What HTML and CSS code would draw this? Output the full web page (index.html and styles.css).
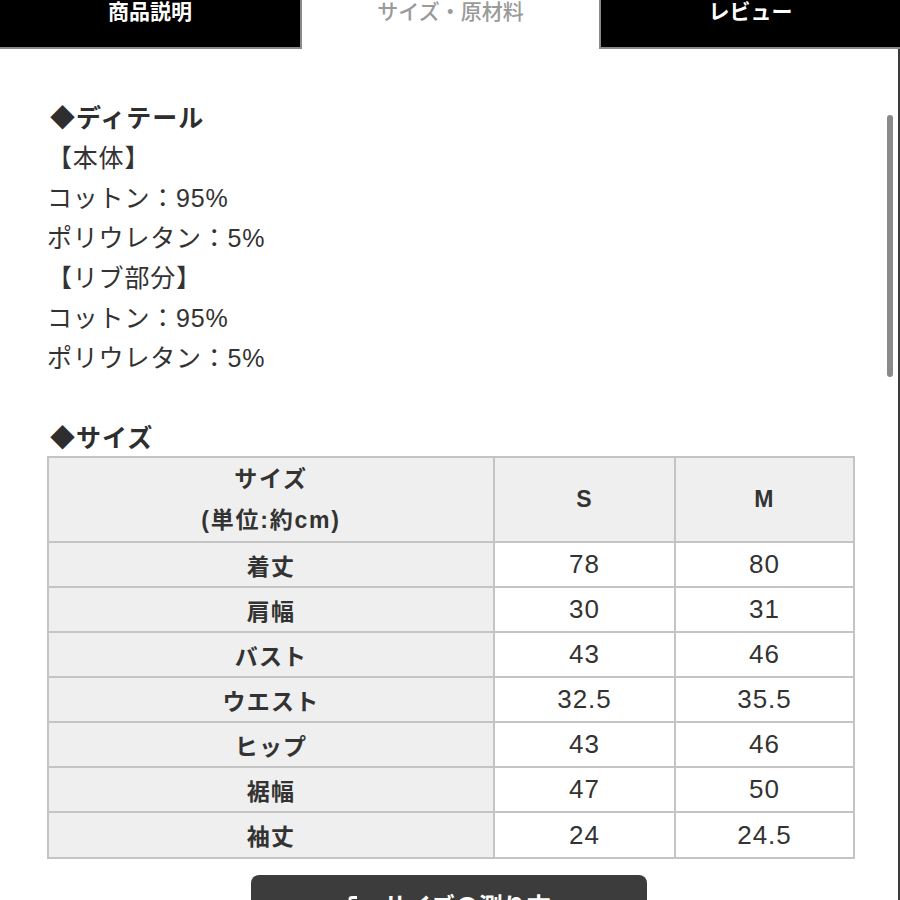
FILE: index.html
```html
<!DOCTYPE html>
<html lang="ja">
<head>
<meta charset="utf-8">
<link rel="stylesheet" href="styles.css">
</head>
<body>
<div class="tabs">
  <div class="tab tab-left">商品説明</div>
  <div class="tab tab-active">サイズ・原材料</div>
  <div class="tab tab-right">レビュー</div>
</div>
<div class="content">
  <div class="scrollbar"></div>
  <div class="heading">◆ディテール</div>
  <div class="line">【本体】</div>
  <div class="line">コットン：95%</div>
  <div class="line">ポリウレタン：5%</div>
  <div class="line">【リブ部分】</div>
  <div class="line">コットン：95%</div>
  <div class="line">ポリウレタン：5%</div>
  <div class="line blank"></div>
  <div class="heading">◆サイズ</div>
  <table class="size-table">
    <colgroup>
      <col class="c1"><col class="c2"><col class="c3">
    </colgroup>
    <tr class="head">
      <th class="label">サイズ<br>(単位:約cm)</th>
      <th>S</th>
      <th>M</th>
    </tr>
    <tr><th class="label">着丈</th><td>78</td><td>80</td></tr>
    <tr><th class="label">肩幅</th><td>30</td><td>31</td></tr>
    <tr><th class="label">バスト</th><td>43</td><td>46</td></tr>
    <tr><th class="label">ウエスト</th><td>32.5</td><td>35.5</td></tr>
    <tr><th class="label">ヒップ</th><td>43</td><td>46</td></tr>
    <tr><th class="label">裾幅</th><td>47</td><td>50</td></tr>
    <tr><th class="label">袖丈</th><td>24</td><td>24.5</td></tr>
  </table>
  <div class="btn-wrap">
    <div class="btn">
      <svg class="btn-icon" width="12" height="22" viewBox="0 0 12 22"><path d="M3 21 L3 3 Q3 1.5 5 1.5 L10 1.5" stroke="#fff" stroke-width="3" fill="none"/></svg>
      <span>サイズの測り方</span>
    </div>
  </div>
</div>
</body>
</html>
```
FILE: styles.css
```css
html, body {
  margin: 0;
  padding: 0;
  height: 900px;
  overflow: hidden;
  background: #fff;
}
body {
  font-family: "Liberation Sans", "Noto Sans CJK JP", sans-serif;
  color: #333;
}
.tabs {
  display: flex;
  height: 49px;
}
.tab {
  box-sizing: border-box;
  height: 49px;
  font-size: 21px;
  font-weight: 700;
  line-height: 24px;
  text-align: center;
}
.tab-left {
  width: 302px;
  background: #000;
  color: #fff;
  border-right: 2px solid #8a8a8a;
  border-bottom: 2px solid #8a8a8a;
}
.tab-active {
  width: 297px;
  background: #fff;
  color: #9a9a9a;
  font-weight: 500;
}
.tab-right {
  flex: 1;
  background: #000;
  color: #fff;
  border-left: 2px solid #8a8a8a;
  border-bottom: 2px solid #8a8a8a;
}
.content {
  position: relative;
  box-sizing: border-box;
  width: 900px;
  height: 851px;
  padding: 49px 0 0 47px;
  border-right: 2px solid #3a3a3a;
}
.scrollbar {
  position: absolute;
  left: 887px;
  top: 66px;
  width: 6px;
  height: 262px;
  border-radius: 3px;
  background: #8a8a8a;
}
.heading {
  font-size: 25px;
  font-weight: 700;
  line-height: 40px;
  padding-left: 3px;
  letter-spacing: 1px;
  color: #2e2e2e;
}
.line {
  font-size: 25px;
  line-height: 40px;
  color: #333;
  letter-spacing: 0.8px;
}
.blank {
  height: 40px;
}
.size-table {
  border-collapse: collapse;
  width: 806px;
  table-layout: fixed;
  margin-top: -2px;
}
.c1 { width: 446px; }
.c2 { width: 181px; }
.c3 { width: 179px; }
.size-table th,
.size-table td {
  border: 2px solid #c4c4c4;
  text-align: center;
  padding: 0;
  height: 43px;
}
.size-table tr:last-child th,
.size-table tr:last-child td {
  height: 44px;
}
.size-table th {
  background: #efefef;
  font-size: 23px;
  font-weight: 700;
  letter-spacing: 1.2px;
  color: #333;
}
.size-table td {
  font-size: 26px;
  letter-spacing: 1px;
  color: #333;
  background: #fff;
}
.size-table .head th {
  height: 83px;
  line-height: 41px;
}
.size-table .head th.label {
  letter-spacing: 1.8px;
}
.btn-wrap {
  display: flex;
  justify-content: center;
  padding-top: 16px;
  margin-left: -47px;
}
.btn {
  width: 396px;
  height: 56px;
  background: #3c3c3c;
  border-radius: 8px;
  color: #fff;
  display: flex;
  align-items: flex-start;
  justify-content: center;
  padding-top: 17px;
  box-sizing: border-box;
  gap: 24px;
  font-size: 24px;
  font-weight: 700;
  line-height: 30px;
}
.btn-icon {
  margin-top: 4px;
}
```
